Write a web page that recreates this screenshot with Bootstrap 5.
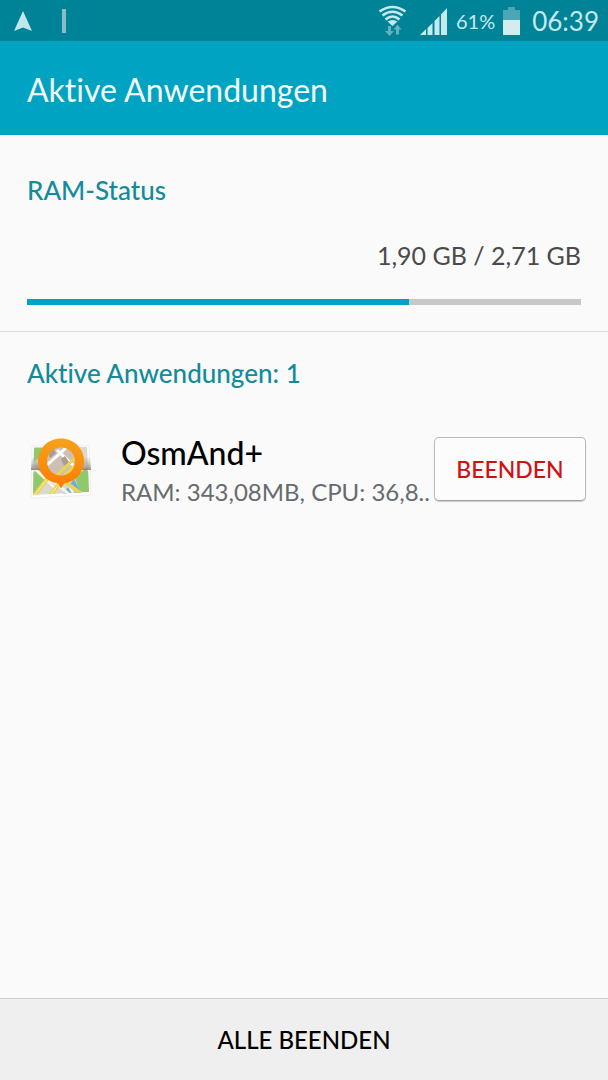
<!DOCTYPE html>
<html lang="de">
<head>
<meta charset="utf-8">
<meta name="viewport" content="width=device-width, initial-scale=1">
<title>Aktive Anwendungen</title>
<link href="https://cdn.jsdelivr.net/npm/bootstrap@5.3.0/dist/css/bootstrap.min.css" rel="stylesheet">
<style>
  body { font-family: Lato, "Open Sans", sans-serif; font-variant-ligatures: none; background: #fafafa; color: #000; }
  .status-bar { height: 41px; background: #008397; color: #c4e9ef; padding: 0 9px 0 14px; }
  .status-bar .charge { font-size: 20px; line-height: 40px; }
  .status-bar .clock { font-size: 26px; line-height: 42px; }
  .app-bar { height: 94px; background: #00a3c1; color: #f2fdff; padding: 4px 27px 0; }
  .app-bar h1 { font-size: 32px; line-height: 40px; }
  .section-title { font-size: 26px; line-height: 32px; color: #128b9b; font-weight: 500; }
  .ram { padding: 39px 27px 26px; border-bottom: 1px solid #dcdcdc; }
  .ram-value { font-size: 25px; line-height: 32px; color: #4a4a4a; margin: 33px 0 28px; }
  .progress { --bs-progress-height: 6px; --bs-progress-bg: #c8c8c8; --bs-progress-bar-bg: #00a3c8; --bs-progress-border-radius: 0; }
  .running { padding: 25px 22px 0 27px; }
  .app-row { margin-top: 44px; }
  .app-icon { width: 68px; height: 68px; }
  .app-text { margin-left: 26px; }
  .app-name { font-size: 32px; line-height: 40px; font-weight: 500; }
  .app-usage { font-size: 24px; line-height: 38px; color: #666b6e; }
  .btn-stop { width: 152px; height: 64px; border: 1px solid #b9b9b9; border-bottom-color: #a0a0a0; border-radius: 5px; background: #fcfcfc; color: #cf1111; font-size: 23px; font-weight: 500; line-height: 32px; box-shadow: 0 1px 1px #ccc; padding: 0; }
  .bottom-bar { border-top: 1px solid #cfcfcf; background: #efefef; }
  .btn-all { height: 81px; font-size: 24px; font-weight: 500; line-height: 32px; color: #000; padding: 0; border: 0; border-radius: 0; }
</style>
</head>
<body class="d-flex flex-column min-vh-100">
<div class="status-bar d-flex align-items-center justify-content-between">
  <svg width="60" height="40" viewBox="0 0 60 40" aria-hidden="true">
    <path d="M9 10 18 30 9 26.500 0 30Z" fill="#c0e7ed"/>
    <path d="M48 8h4v24h-4z" fill="#8abdc7"/>
  </svg>
  <div class="d-flex align-items-center">
    <svg width="70" height="40" viewBox="379 0 70 40" aria-hidden="true">
      <g fill="none" stroke="#c4e9ef" stroke-width="2.600">
        <path d="M380.500 10.500Q393.500 1.500 406.500 10.500M383.500 14.500Q393.500 7 403.500 14.500M386.500 18.500Q393.500 12.500 400.500 18.500"/>
      </g>
      <path d="M388.500 20.500q5-3 10 0l-5 4.500z" fill="#c4e9ef"/>
      <path d="M389 25h3v5h3l-4.500 5-4.500-5h3zM398.500 23.500l4 5h-2.500v5h-3v-5h-2.500z" fill="#65b1be"/>
      <path d="M421 34l6-6v6zM428.500 27l5-5v12h-5zM435.500 20l5-5v19h-5zM442 13.500l6-6.500v27h-6z" fill="#c4e9ef"/>
    </svg>
    <span class="charge ms-2">61%</span>
    <svg class="ms-2" width="17" height="40" viewBox="0 0 17 40" aria-hidden="true">
      <path d="M5 6h7v3h5v10H0V9h5z" fill="#4ba6b5"/><path d="M0 19h17v15H0z" fill="#d3edee"/>
    </svg>
    <span class="clock ms-2 ps-1">06:39</span>
  </div>
</div>
<header class="app-bar d-flex align-items-center"><h1 class="m-0 fw-normal">Aktive Anwendungen</h1></header>
<main class="flex-grow-1">
  <section class="ram">
    <h2 class="section-title m-0">RAM-Status</h2>
    <p class="ram-value text-end">1,90 GB / 2,71 GB</p>
    <div class="progress" role="progressbar" aria-label="RAM-Status" aria-valuenow="69" aria-valuemin="0" aria-valuemax="100">
      <div class="progress-bar" style="width:69%"></div>
    </div>
  </section>
  <section class="running">
    <h2 class="section-title m-0">Aktive Anwendungen: 1</h2>
    <div class="app-row d-flex align-items-start">
      <svg class="app-icon flex-shrink-0" viewBox="27 433 68 68" aria-hidden="true">
        <defs>
          <linearGradient id="pin" x1="0" y1="0" x2="0" y2="1"><stop stop-color="#f5a31c"/><stop offset="1" stop-color="#ff7a00"/></linearGradient>
          <linearGradient id="fold" x1="0" y1="0" x2="0" y2="1"><stop stop-color="#b8b0a8" stop-opacity=".2"/><stop offset="1" stop-color="#776f6c" stop-opacity=".8"/></linearGradient>
          <clipPath id="sheet"><path d="M34 447h53l2 45-56 3z"/></clipPath>
          <clipPath id="lens"><circle cx="61" cy="461.500" r="14.500"/></clipPath>
        </defs>
        <path d="M32 446h57l2 49-60 3z" fill="#fff" stroke="#eee"/>
        <g clip-path="url(#sheet)">
          <path d="M30 445h62v53H30z" fill="#dcd8cb"/>
          <path d="M33 448h16l-16 15zM33 473l8-5 7 8-15 18zM74 475l10-8 7 8v17H80z" fill="#91c86c"/>
          <path d="M62 495l12-16 8 15z" fill="#71add8"/>
          <path d="M52 480l19 16M75 496l-8-14 20-17M33 467l23 22" fill="none" stroke="#f5f3ea" stroke-width="3"/>
          <path d="M33 497l30-38M49 497l20-26M61 479l22 16" fill="none" stroke="#e7d653" stroke-width="4"/>
          <path d="M33 497l30-38M49 497l20-26" fill="none" stroke="#f6efb0" stroke-width="1"/>
        </g>
        <path d="M32 458h58l1 12H31z" fill="url(#fold)"/>
        <g clip-path="url(#lens)">
          <path d="M45 445h33v33H45z" fill="#cfc0b5"/>
          <path d="M47 465l19-17M57 450l20 19" stroke="#fff" stroke-width="3"/>
          <path d="M54 478l23-22M61 479l18-17" stroke="#e8d749" stroke-width="3"/>
          <path d="M48 453l5-5 3 5-6 5zM61 459l4-3 4 6-5 4z" fill="#ab9c93"/>
        </g>
        <path fill="url(#pin)" fill-rule="evenodd" d="M61 438.500c-13 0-23 10-23 22.500 0 12 9 21 20 22.500l3 5 3-5c11-1.500 20-10.500 20-22.500 0-12.500-10-22.500-23-22.500zm0 9a14 14 0 1 1 0 28 14 14 0 0 1 0-28z"/>
      </svg>
      <div class="app-text flex-grow-1 overflow-hidden text-nowrap">
        <div class="app-name">OsmAnd+</div>
        <div class="app-usage">RAM: 343,08MB, CPU: 36,8..</div>
      </div>
      <button type="button" class="btn btn-stop flex-shrink-0 mt-1">BEENDEN</button>
    </div>
  </section>
</main>
<footer class="bottom-bar"><button type="button" class="btn btn-all w-100">ALLE BEENDEN</button></footer>
<script src="https://cdn.jsdelivr.net/npm/bootstrap@5.3.0/dist/js/bootstrap.bundle.min.js"></script>
</body>
</html>
